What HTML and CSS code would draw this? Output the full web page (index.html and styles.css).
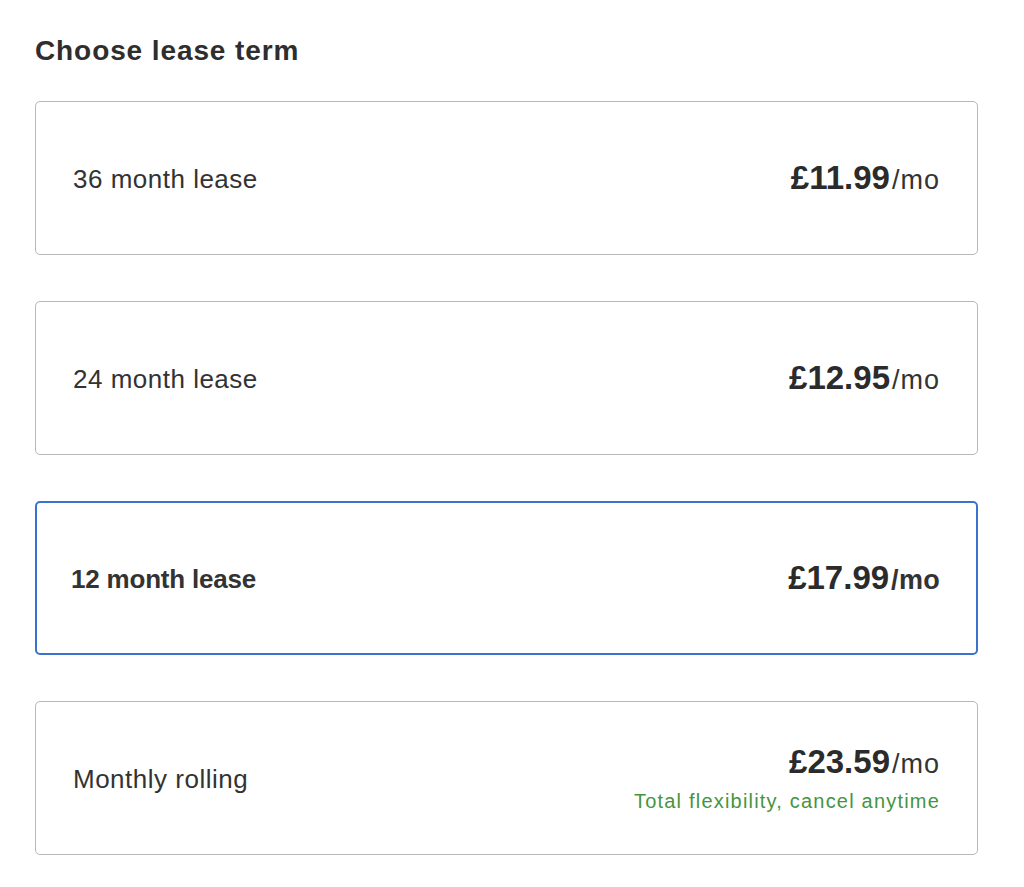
FILE: index.html
```html
<!DOCTYPE html>
<html>
<head>
<meta charset="utf-8">
<link rel="stylesheet" href="styles.css">
</head>
<body>
<div class="page">
  <h2 class="title">Choose lease term</h2>
  <div class="options">
    <div class="option">
      <span class="label">36 month lease</span>
      <div class="pricing single"><div class="price"><span class="amount">£11.99</span><span class="per">/mo</span></div></div>
    </div>
    <div class="option">
      <span class="label">24 month lease</span>
      <div class="pricing single"><div class="price"><span class="amount">£12.95</span><span class="per">/mo</span></div></div>
    </div>
    <div class="option selected">
      <span class="label">12 month lease</span>
      <div class="pricing single"><div class="price"><span class="amount">£17.99</span><span class="per">/mo</span></div></div>
    </div>
    <div class="option">
      <span class="label">Monthly rolling</span>
      <div class="pricing">
        <div class="price"><span class="amount">£23.59</span><span class="per">/mo</span></div>
        <div class="note">Total flexibility, cancel anytime</div>
      </div>
    </div>
  </div>
</div>
</body>
</html>
```
FILE: styles.css
```css
html, body {
  margin: 0;
  padding: 0;
  background: #ffffff;
}
body {
  font-family: "Liberation Sans", Arial, sans-serif;
  color: #2e2e2e;
}
.page {
  padding: 35px 46px 0 35px;
}
.title {
  margin: 0 0 34px 0;
  font-size: 28px;
  line-height: 32px;
  font-weight: 700;
  letter-spacing: 0.9px;
  color: #2e2e2e;
}
.options {
  display: flex;
  flex-direction: column;
  gap: 46px;
}
.option {
  box-sizing: border-box;
  height: 154px;
  border: 1px solid #b8b8b8;
  border-radius: 5px;
  display: flex;
  align-items: center;
  justify-content: space-between;
  padding: 0 37px 0 37px;
}
.option.selected {
  border: 2px solid #3a72cf;
  padding: 0 36px 0 34px;
}
.label {
  font-size: 26px;
  letter-spacing: 0.5px;
  color: #333333;
  margin-top: 3px;
}
.selected .label {
  font-weight: 700;
  letter-spacing: -0.2px;
}
.pricing {
  display: flex;
  flex-direction: column;
  align-items: flex-end;
}
.pricing.single {
  margin-top: 5px;
}
.price {
  line-height: 36px;
  white-space: nowrap;
}
.amount {
  font-size: 33px;
  font-weight: 700;
  letter-spacing: 0;
  color: #2b2b2b;
}
.per {
  font-size: 27px;
  letter-spacing: 1px;
  margin-left: 2px;
  color: #333333;
}
.selected .per {
  font-weight: 700;
  letter-spacing: 0.3px;
}
.note {
  margin-top: 3px;
  font-size: 20px;
  line-height: 24px;
  letter-spacing: 1.2px;
  color: #46953c;
}
```
